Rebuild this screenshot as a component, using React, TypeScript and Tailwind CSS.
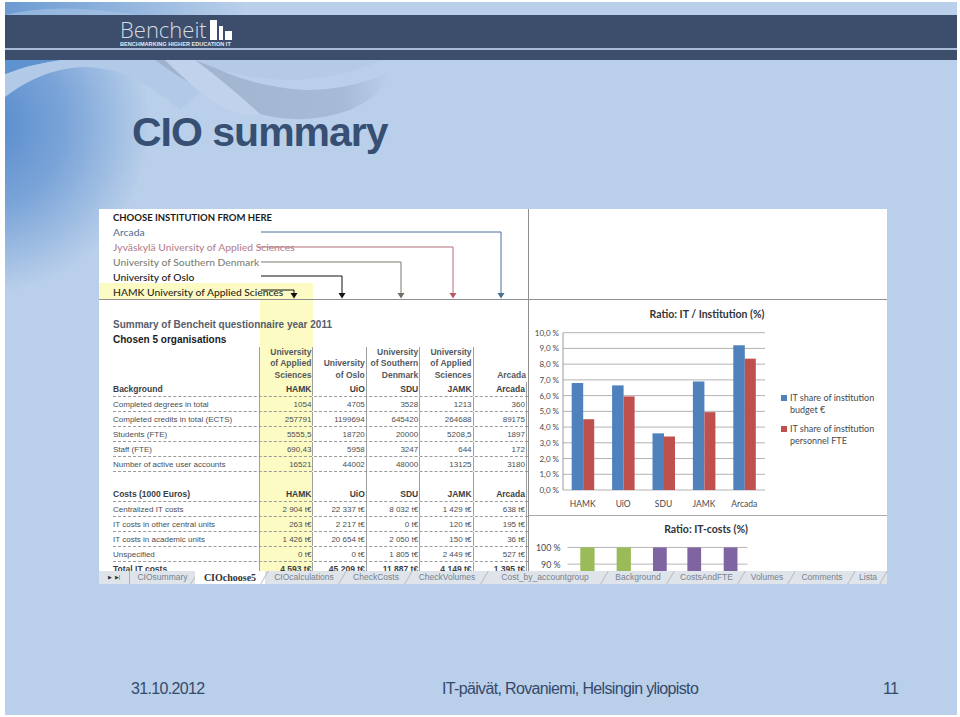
const sans = "font-['Liberation_Sans',Arial,sans-serif]"
const lato = "font-['Lato','Liberation_Sans',sans-serif]"

const backgroundRows = [
  ["Completed degrees in total", "1054", "4705", "3528", "1213", "360"],
  ["Completed credits in total (ECTS)", "257791", "1199694", "645420", "264688", "89175"],
  ["Students (FTE)", "5555,5", "18720", "20000", "5208,5", "1897"],
  ["Staff (FTE)", "690,43", "5958", "3247", "644", "172"],
  ["Number of active user accounts", "16521", "44002", "48000", "13125", "3180"],
]

const costRows = [
  ["Centralized IT costs", "2 904 t€", "22 337 t€", "8 032 t€", "1 429 t€", "638 t€"],
  ["IT costs in other central units", "263 t€", "2 217 t€", "0 t€", "120 t€", "195 t€"],
  ["IT costs in academic units", "1 426 t€", "20 654 t€", "2 050 t€", "150 t€", "36 t€"],
  ["Unspecified", "0 t€", "0 t€", "1 805 t€", "2 449 t€", "527 t€"],
]

const orgHeaders = ["HAMK", "UiO", "SDU", "JAMK", "Arcada"]

const tabs = [
  { name: "CIOsummary", width: "w-[65px]" },
  { name: "CIOchoose5", width: "w-[70px]", active: true },
  { name: "CIOcalculations", width: "w-[78px]" },
  { name: "CheckCosts", width: "w-[66px]" },
  { name: "CheckVolumes", width: "w-[76px]" },
  { name: "Cost_by_accountgroup", width: "w-[120px]" },
  { name: "Background", width: "w-[66px]" },
  { name: "CostsAndFTE", width: "w-[71px]" },
  { name: "Volumes", width: "w-[50px]" },
  { name: "Comments", width: "w-[60px]" },
  { name: "Lista", width: "w-[32px]" },
]

const Row = ({
  cells,
  bold,
  border = true,
}: {
  cells: string[]
  bold?: boolean
  border?: boolean
}) => (
  <div
    className={`flex h-[15px] leading-[13px] ${bold ? "text-[8.5px] font-bold text-[#3a3e44]" : "text-[8px] text-[#4a4e54]"} ${
      border ? "border-b border-dashed border-[#9a9a9a]" : ""
    }`}
  >
    <div className="flex w-[147px] items-end border-r border-[#a0a0a0] whitespace-nowrap">{cells[0]}</div>
    {cells.slice(1).map((cell, index) => (
      <div
        key={index}
        className="flex w-[53.4px] items-end justify-end border-r border-[#a0a0a0] pr-[1px] whitespace-nowrap"
      >
        {cell}
      </div>
    ))}
  </div>
)

const HeaderCell = ({ lines }: { lines: string[] }) => (
  <div className="flex w-[53.4px] flex-col justify-end border-r border-[#a0a0a0] pr-[1px] pb-[1px] text-right text-[8.5px] leading-[11.3px] font-bold text-[#55595f]">
    {lines.map((line) => (
      <div key={line} className="whitespace-nowrap">
        {line}
      </div>
    ))}
  </div>
)

const Arrows = () => (
  <svg className="absolute top-0 left-0" width="429" height="91" viewBox="0 0 429 91" fill="none">
    <path d="M162 23H402V84" stroke="#4a6f96" strokeWidth="1" />
    <path d="M398.5 84h7l-3.500 5.500z" fill="#4a6f96" />
    <path d="M159 38H354V84" stroke="#b0707a" strokeWidth="1" />
    <path d="M350.500 84h7l-3.500 5.500z" fill="#b85a62" />
    <path d="M162 53H302V84" stroke="#76796c" strokeWidth="1" />
    <path d="M298.500 84h7l-3.500 5.500z" fill="#6d7062" />
    <path d="M162 67H243V84" stroke="#111111" strokeWidth="1" />
    <path d="M239.500 84h7l-3.500 5.500z" fill="#111111" />
    <path d="M162 81H195V85" stroke="#111111" strokeWidth="1" />
    <path d="M191.500 84h7l-3.500 5.500z" fill="#111111" />
  </svg>
)

const barChartData = [
  { label: "HAMK", blue: 6.8, red: 4.5 },
  { label: "UiO", blue: 6.65, red: 5.95 },
  { label: "SDU", blue: 3.6, red: 3.4 },
  { label: "JAMK", blue: 6.9, red: 4.95 },
  { label: "Arcada", blue: 9.2, red: 8.35 },
]

const RatioChart = () => {
  const zero = 190
  const step = 15.73
  const ticks = Array.from({ length: 11 }, (_, i) => i)
  return (
    <svg width="358" height="215" viewBox="0 0 358 215" className="block">
      <text x="178" y="18" textAnchor="middle" fontSize="10.500" fontWeight="700" fill="#30343a" fontFamily="Lato">
        Ratio: IT / Institution (%)
      </text>
      {ticks.map((t) => (
        <g key={t}>
          <line x1="34" x2="236" y1={zero - t * step} y2={zero - t * step} stroke="#b3b3b3" strokeWidth="1" />
          <text x="30" y={zero - t * step + 3} textAnchor="end" fontSize="8" fill="#45494f" fontFamily="Lato">
            {t},0 %
          </text>
        </g>
      ))}
      <line x1="34" x2="34" y1={zero - 10 * step} y2={zero} stroke="#9a9a9a" />
      {barChartData.map((d, i) => {
        const x = 42.7 + i * 40.4
        return (
          <g key={d.label}>
            <rect x={x} y={zero - d.blue * step} width="11.500" height={d.blue * step} fill="#4f81bd" />
            <rect x={x + 11.5} y={zero - d.red * step} width="11" height={d.red * step} fill="#c0504d" />
            <text x={x + 11} y={zero + 17} textAnchor="middle" fontSize="8.500" fill="#45494f" fontFamily="Lato">
              {d.label}
            </text>
          </g>
        )
      })}
      <rect x="252" y="95" width="6" height="6" fill="#4f81bd" />
      <text x="261" y="101" fontSize="9" fill="#45494f" fontFamily="Lato">
        IT share of institution
      </text>
      <text x="261" y="113" fontSize="9" fill="#45494f" fontFamily="Lato">
        budget €
      </text>
      <rect x="252" y="126" width="6" height="6" fill="#c0504d" />
      <text x="261" y="132" fontSize="9" fill="#45494f" fontFamily="Lato">
        IT share of institution
      </text>
      <text x="261" y="144" fontSize="9" fill="#45494f" fontFamily="Lato">
        personnel FTE
      </text>
    </svg>
  )
}

const CostsChart = () => (
  <svg width="358" height="56" viewBox="0 0 358 56" className="block">
    <text x="177" y="17" textAnchor="middle" fontSize="10.700" fontWeight="700" fill="#30343a" fontFamily="Lato">
      Ratio: IT-costs (%)
    </text>
    <line x1="36" x2="219" y1="32" y2="32" stroke="#b3b3b3" />
    <line x1="36" x2="219" y1="49" y2="49" stroke="#b3b3b3" />
    <text x="29" y="36" textAnchor="end" fontSize="9" fill="#45494f" fontFamily="Lato">
      100 %
    </text>
    <text x="29" y="53" textAnchor="end" fontSize="9" fill="#45494f" fontFamily="Lato">
      90 %
    </text>
    <rect x="49" y="32" width="14.500" height="24" fill="#9bbb59" />
    <rect x="86" y="32" width="14.500" height="24" fill="#9bbb59" />
    <rect x="123" y="32" width="14" height="24" fill="#8064a2" />
    <rect x="158" y="32" width="14" height="24" fill="#8064a2" />
    <rect x="195" y="32" width="14" height="24" fill="#8064a2" />
  </svg>
)

const SlideBackground = () => (
  <svg className="absolute inset-0" width="952" height="713" viewBox="0 0 952 713" preserveAspectRatio="none">
    <defs>
      <radialGradient id="corner" gradientUnits="userSpaceOnUse" cx="-25" cy="122" r="170">
        <stop offset="0" stopColor="#5388cb" />
        <stop offset="0.5" stopColor="#7aa4d8" />
        <stop offset="1" stopColor="#b9cfea" />
      </radialGradient>
      <linearGradient id="top" x1="0" y1="0" x2="1" y2="0">
        <stop offset="0" stopColor="#6c9bd2" />
        <stop offset="1" stopColor="#b9cfea" />
      </linearGradient>
      <linearGradient id="swoosh" x1="0" y1="0" x2="1" y2="0">
        <stop offset="0" stopColor="#9fb3cf" />
        <stop offset="0.8" stopColor="#a6bbd6" />
        <stop offset="1" stopColor="#b9cfea" />
      </linearGradient>
    </defs>
    <rect x="0" y="0" width="240" height="13" fill="url(#top)" />
    <path d="M0 13 Q50 0 135 13Z" fill="#a9c4e4" opacity="0.6" />
    <rect x="0" y="58" width="230" height="240" fill="url(#corner)" />
    <path d="M0 95 Q35 68 75 65 Q125 63 175 108 L230 58 H55 Q25 62 0 72Z" fill="#b2c9e7" />
    <path d="M0 58 H55 Q25 62 0 72Z" fill="#5f93cf" />
    <path d="M150 58 H195 Q240 84 300 88 Q345 88 385 70 Q380 92 345 108 Q300 124 255 112 Q195 92 150 58Z" fill="url(#swoosh)" />
    <path d="M190 58 H378 Q330 78 280 78 Q230 76 190 58Z" fill="#b4cae6" />
    <path d="M190 58 Q220 80 255 112 Q240 116 215 104 Q190 88 160 58Z" fill="#c1d3ec" />
  </svg>
)

export default function App() {
  return (
    <div className={`h-[717px] w-[960px] overflow-hidden bg-white pt-[2px] pb-[2px] pl-[5px] ${sans}`}>
      <div className="relative h-[713px] w-[952px] overflow-hidden bg-[#b9cfea]">
        <SlideBackground />

        <div className="relative flex h-[713px] flex-col">
          {/* header band */}
          <div className="mt-[13px] flex h-[33px] items-start bg-[#3c4e6b] pt-[2px] pl-[115px]">
            <div className="flex flex-col">
              <div className="flex items-end gap-[3px]">
                <span className="font-['Open_Sans',sans-serif] text-[22px] leading-[24px] font-light text-[#d5dbe6]">
                  Bencheit
                </span>
                <div className="mb-[1px] flex items-end gap-[2px]">
                  <div className="h-[20px] w-[7px] bg-white" />
                  <div className="h-[14px] w-[4px] bg-white" />
                  <div className="h-[9px] w-[7px] bg-white" />
                </div>
              </div>
              <span className="text-[5.6px] leading-[6px] font-bold whitespace-nowrap text-[#e5e9f0]">
                BENCHMARKING HIGHER EDUCATION IT
              </span>
            </div>
          </div>
          <div className="h-[2px] bg-[#a9bdd8]" />
          <div className="h-[10px] bg-[#3c4e6b]" />

          <h1 className="mt-[42px] ml-[127px] text-[41px] leading-[60px] font-bold tracking-[-1px] text-[#364f72]">
            CIO summary
          </h1>

          {/* pasted excel picture */}
          <div className="mt-[47px] ml-[94px] flex h-[375px] w-[788px] flex-col overflow-hidden bg-white">
            <div className="flex h-[362px] shrink-0">
              <div className="relative h-full w-[429px] overflow-hidden">
                <div className="absolute top-[74px] left-0 h-[17px] w-[214px] bg-[#fdfbc4]" />
                <div className={`relative flex h-[91px] flex-col border-b border-[#8f8f8f] pt-[1px] pl-[14px] text-[10.3px] leading-[15px] font-medium ${lato}`}>
                  <div className="text-[9.5px] font-bold text-[#1c1c1c]">CHOOSE INSTITUTION FROM HERE</div>
                  <div className="text-[#5a7598]">Arcada</div>
                  <div className="text-[#b7838d]">Jyväskylä University of Applied Sciences</div>
                  <div className="text-[#7e8276]">University of Southern Denmark</div>
                  <div className="text-[#202020]">University of Oslo</div>
                  <div className="text-[#2a2a20]">HAMK University of Applied Sciences</div>
                </div>
                <Arrows />

                <div className="relative h-[275px] pl-[14px]">
                  <div className="absolute top-0 bottom-0 left-[161px] w-[53px] bg-[#fdfbc4]" />
                  <div className="relative">
                    <div className="pt-[17px] text-[10px] leading-[15px] font-bold text-[#575d6b]">
                      Summary of Bencheit questionnaire year 2011
                    </div>
                    <div className="text-[10px] leading-[15px] font-bold text-[#1c1c1c]">Chosen 5 organisations</div>
                    <div className="flex h-[35px]">
                      <div className="w-[147px] border-r border-[#a0a0a0]" />
                      <HeaderCell lines={["University", "of Applied", "Sciences"]} />
                      <HeaderCell lines={["University", "of Oslo"]} />
                      <HeaderCell lines={["University", "of Southern", "Denmark"]} />
                      <HeaderCell lines={["University", "of Applied", "Sciences"]} />
                      <div className="flex w-[53.4px] flex-col justify-end pr-[1px] pb-[1px] text-right text-[8.5px] leading-[11.3px] font-bold text-[#55595f]">
                        Arcada
                      </div>
                    </div>
                    <Row cells={["Background", ...orgHeaders]} bold />
                    {backgroundRows.map((row) => (
                      <Row key={row[0]} cells={row} />
                    ))}
                    <Row cells={["", "", "", "", "", ""]} border={false} />
                    <Row cells={["Costs (1000 Euros)", ...orgHeaders]} bold />
                    {costRows.map((row) => (
                      <Row key={row[0]} cells={row} />
                    ))}
                    <Row cells={["Total IT costs", "4 593 t€", "45 209 t€", "11 887 t€", "4 149 t€", "1 395 t€"]} bold />
                  </div>
                </div>
              </div>

              <div className="flex w-[359px] flex-col overflow-hidden border-l border-[#8f8f8f]">
                <div className="h-[91px] shrink-0 border-b border-[#8f8f8f]" />
                <div className="h-[216px] shrink-0 border-b border-[#a8a8a8]">
                  <RatioChart />
                </div>
                <CostsChart />
              </div>
            </div>

            {/* sheet tabs */}
            <div className="flex h-[13px] shrink-0 items-center bg-[#dfe4ea] text-[8.5px] text-[#76828f]">
              <div className="flex h-full w-[31px] items-center justify-center gap-[3px] border-r border-[#a8b0ba] text-[5px] text-[#333]">
                <span>▶</span>
                <span>▶|</span>
              </div>
              {tabs.map((tab) => (
                <div
                  key={tab.name}
                  className={`relative flex h-full ${tab.width} items-center justify-center whitespace-nowrap ${
                    tab.active ? "bg-white font-['Liberation_Serif',serif] text-[10px] font-bold text-[#333]" : ""
                  }`}
                >
                  {tab.name}
                  <div className="absolute top-0 right-0 h-full w-0 skew-x-[-30deg] border-r border-[#b4bac2]" />
                </div>
              ))}
            </div>
          </div>

          {/* footer */}
          <div className="mt-[96px] flex items-center text-[16px] leading-[18px] tracking-[-0.65px] text-[#36496a]">
            <div className="ml-[126px] w-[311px]">31.10.2012</div>
            <div className="w-[441px]">IT-päivät, Rovaniemi, Helsingin yliopisto</div>
            <div>11</div>
          </div>
        </div>
      </div>
    </div>
  )
}
